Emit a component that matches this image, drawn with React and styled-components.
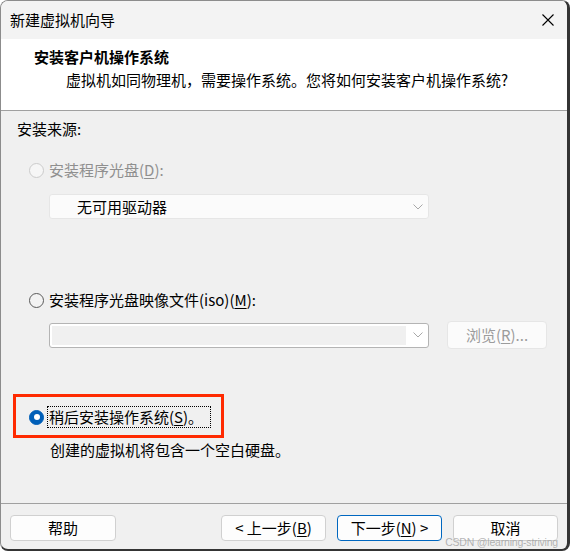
import React from 'react'
import styled, { createGlobalStyle } from 'styled-components'

const GlobalStyle = createGlobalStyle`
  html, body {
    margin: 0;
    padding: 0;
    background: #ffffff;
  }
  body {
    font-family: "Noto Sans CJK SC", "Noto Sans", sans-serif;
    font-size: 15px;
    color: #000;
  }
`

const Window = styled.div`
  width: 570px;
  height: 551px;
  box-sizing: border-box;
  border: 1px solid #8c8c8c;
  border-right: 3px solid #343434;
  border-bottom: 2px solid #343434;
  border-radius: 8px;
  overflow: hidden;
  display: flex;
  flex-direction: column;
  position: relative;
  background: #f0f0f0;
`

const TitleBar = styled.div`
  height: 38px;
  flex: none;
  background: #f3f3f3;
  display: flex;
  align-items: center;
  justify-content: space-between;
  padding: 0 13px 0 9px;
  font-size: 15px;
  line-height: 20px;
`

const Close = styled.svg`
  width: 12px;
  height: 12px;
`

const Header = styled.div`
  flex: none;
  box-sizing: border-box;
  background: #ffffff;
  border-bottom: 1px solid #a0a0a0;
  height: 72px;
  padding-top: 8px;
  display: flex;
  flex-direction: column;
  gap: 3px;
`

const HeaderTitle = styled.div`
  font-weight: bold;
  line-height: 20px;
  padding-left: 33px;
`

const HeaderText = styled.div`
  line-height: 20px;
  padding-left: 65px;
`

const Body = styled.div`
  flex: 1;
  display: flex;
  flex-direction: column;
  padding-left: 12px;
  padding-top: 8px;
  border-bottom: 1px solid #a0a0a0;
`

const Label = styled.div`
  line-height: 20px;
  margin-left: 4px;
`

const RadioRow = styled.div`
  display: flex;
  align-items: center;
  height: 20px;
  margin-left: ${p => p.$indent ?? 16}px;
  margin-top: ${p => p.$top ?? 0}px;
  color: ${p => (p.$disabled ? '#8f8f8f' : '#000')};
  line-height: 20px;
`

const Circle = styled.span`
  width: 15px;
  height: 15px;
  box-sizing: border-box;
  border-radius: 50%;
  flex: none;
  margin-right: 5px;
  background: ${p => (p.$checked ? '#005fb8' : p.$disabled ? '#f6f6f6' : '#f3f3f3')};
  border: 1px solid ${p => (p.$checked ? '#005fb8' : p.$disabled ? '#cbcbcb' : '#5a5a5a')};
  display: flex;
  align-items: center;
  justify-content: center;

  &::after {
    content: '';
    display: ${p => (p.$checked ? 'block' : 'none')};
    width: 6px;
    height: 6px;
    border-radius: 50%;
    background: #ffffff;
  }
`

const Key = styled.span`
  text-decoration: underline;
  text-underline-offset: 2px;
`

const Focus = styled.span`
  outline: 1px dotted #000;
  outline-offset: 0;
  padding: 0 7px 0 1px;
  margin-left: -1px;
`

const Combo = styled.div`
  width: ${p => p.$width}px;
  height: ${p => p.$height}px;
  box-sizing: border-box;
  margin-left: ${p => p.$indent ?? 0}px;
  margin-top: ${p => p.$top ?? 0}px;
  background: ${p => (p.$editable ? '#ffffff' : '#fbfbfb')};
  border: 1px solid ${p => (p.$editable ? '#b4b4b4' : '#e6e6e6')};
  border-radius: 3px;
  display: flex;
  align-items: center;
  padding: ${p => (p.$editable ? '2px' : '0 0 0 27px')};
  line-height: 20px;
`

const ComboValue = styled.span`
  flex: 1;
`

const ComboField = styled.div`
  flex: 1;
  align-self: stretch;
  background: #f0f0f0;
`

const Chevron = styled.svg`
  width: 10px;
  height: 6px;
  margin: 0 ${p => (p.$editable ? 3 : 5)}px 0 ${p => (p.$editable ? 7 : 0)}px;
`

const FileRow = styled.div`
  display: flex;
  align-items: center;
  gap: 18px;
  margin-left: 36px;
  margin-top: 11px;
`

const Button = styled.div`
  width: ${p => p.$width ?? 106}px;
  height: ${p => p.$height ?? 26}px;
  box-sizing: border-box;
  border-radius: 4px;
  background: ${p => (p.$disabled ? '#fbfbfb' : '#fdfdfd')};
  border: 1px solid ${p => (p.$primary ? '#0067c0' : p.$disabled ? '#e6e6e6' : '#d0d0d0')};
  color: ${p => (p.$disabled ? '#9c9c9c' : '#000')};
  display: flex;
  align-items: center;
  justify-content: center;
  line-height: 20px;
`

const Highlight = styled.div`
  width: 211px;
  box-sizing: border-box;
  border: 3px solid #ff2a00;
  margin-top: 45px;
  padding: 10px 0 8px 13px;
`

const Hint = styled.div`
  line-height: 20px;
  margin-left: 37px;
  margin-top: 2px;
`

const Footer = styled.div`
  height: 45px;
  flex: none;
  display: flex;
  align-items: flex-start;
  justify-content: space-between;
  padding: 11px 9px 0 9px;
  box-sizing: border-box;
`

const ButtonGroup = styled.div`
  display: flex;
  gap: 11px;
`

const Watermark = styled.div`
  position: absolute;
  right: 9px;
  bottom: 0px;
  font-family: "Liberation Sans", Arial, sans-serif;
  font-size: 10.5px;
  letter-spacing: -0.2px;
  line-height: 13px;
  color: rgba(150, 150, 150, 0.7);
  pointer-events: none;
`

const Arrow = ({ editable }) => (
  <Chevron viewBox="0 0 10 6" $editable={editable}>
    <path d="M0.5 0.5 L5 5 L9.5 0.5" fill="none" stroke="#a8a8a8" strokeWidth="1" />
  </Chevron>
)

const App = () => (
  <>
    <GlobalStyle />
    <Window>
      <TitleBar>
        <span>新建虚拟机向导</span>
        <Close viewBox="0 0 12 12">
          <path d="M0.5 0.5 L11.5 11.5 M11.5 0.5 L0.5 11.5" stroke="#000" strokeWidth="1.1" />
        </Close>
      </TitleBar>
      <Header>
        <HeaderTitle>安装客户机操作系统</HeaderTitle>
        <HeaderText>虚拟机如同物理机，需要操作系统。您将如何安装客户机操作系统?</HeaderText>
      </Header>
      <Body>
        <Label>安装来源:</Label>
        <RadioRow $disabled $top={21}>
          <Circle $disabled />
          安装程序光盘(<Key>D</Key>):
        </RadioRow>
        <Combo $width={380} $height={25} $indent={36} $top={14}>
          <ComboValue>无可用驱动器</ComboValue>
          <Arrow />
        </Combo>
        <RadioRow $top={71}>
          <Circle />
          安装程序光盘映像文件(iso)(<Key>M</Key>):
        </RadioRow>
        <FileRow>
          <Combo $editable $width={380} $height={25}>
            <ComboField />
            <Arrow editable />
          </Combo>
          <Button $disabled $width={100} $height={28}>
            浏览(<Key>R</Key>)...
          </Button>
        </FileRow>
        <Highlight>
          <RadioRow $indent={0}>
            <Circle $checked />
            <Focus>稍后安装操作系统(<Key>S</Key>)。</Focus>
          </RadioRow>
        </Highlight>
        <Hint>创建的虚拟机将包含一个空白硬盘。</Hint>
      </Body>
      <Footer>
        <Button>帮助</Button>
        <ButtonGroup>
          <Button $width={105}>&lt; 上一步(<Key>B</Key>)</Button>
          <Button $width={105} $primary>下一步(<Key>N</Key>) &gt;</Button>
          <Button $width={105}>取消</Button>
        </ButtonGroup>
      </Footer>
      <Watermark>CSDN @learning-striving</Watermark>
    </Window>
  </>
)

export default App
